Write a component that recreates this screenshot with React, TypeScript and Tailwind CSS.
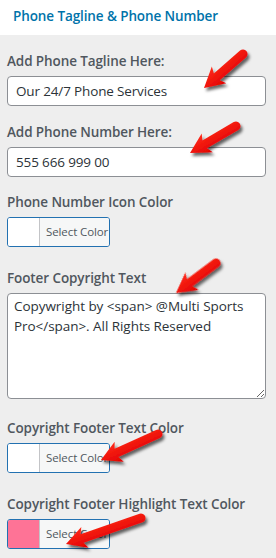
import React from 'react';

const font = { fontFamily: '"Open Sans", "Noto Sans", sans-serif' };

type ArrowProps = { tail: [number, number]; tip: [number, number] };

// red annotation arrow, tip at (0,0) pointing along -x in local coords
const Arrow = ({ tail, tip }: ArrowProps) => {
  const dx = tail[0] - tip[0];
  const dy = tail[1] - tip[1];
  const len = Math.sqrt(dx * dx + dy * dy);
  const angle = (Math.atan2(dy, dx) * 180) / Math.PI;
  const h = 20;
  const w = 11;
  const s = 4.5;
  const d = `M0,0 L${h},${-w} L${h - 3},${-s} L${len},${-s} A${s},${s} 0 0 1 ${len},${s} L${h - 3},${s} L${h},${w} Z`;
  return (
    <g transform={`translate(${tip[0]} ${tip[1]}) rotate(${angle})`}>
      <path d={d} fill="url(#arrowFill)" />
    </g>
  );
};

const Label = ({ children }: { children: React.ReactNode }) => (
  <label className="block text-[13.5px] tracking-[-0.1px] leading-5 font-semibold text-[#50575e] mb-[5px]">
    {children}
  </label>
);

const TextField = ({ value }: { value: string }) => (
  <input
    readOnly
    value={value}
    className="block w-[259px] h-[30px] px-[8px] bg-white border border-[#8c8f94] rounded-[4px] text-[13.5px] tracking-[-0.15px] text-[#2c3338] outline-none"
    style={font}
  />
);

const ColorButton = ({ swatch }: { swatch: string }) => (
  <div className="flex w-[103px] h-[30px] border border-[#2271b1] rounded-[3px] overflow-hidden">
    <div className="w-[31px] h-full" style={{ backgroundColor: swatch }} />
    <div className="flex-1 flex items-center pl-[6px] border-l border-[#c3c4c7] bg-[#f6f7f7] text-[11.5px] tracking-[-0.1px] text-[#50575e]">
      Select Color
    </div>
  </div>
);

export default function App() {
  return (
    <div className="relative w-[276px] h-[558px] bg-[#eeeeee] overflow-hidden" style={font}>
      {/* Section header */}
      <div className="h-[35px] bg-white flex items-center px-[13px] pb-[2px]">
        <h3 className="text-[13.5px] tracking-[-0.1px] font-semibold text-[#0073aa]">Phone Tagline &amp; Phone Number</h3>
      </div>

      <div className="px-[7px]">
        <div className="mt-[16px]">
          <Label>Add Phone Tagline Here:</Label>
          <TextField value="Our 24/7 Phone Services" />
        </div>

        <div className="mt-[16px]">
          <Label>Add Phone Number Here:</Label>
          <TextField value="555 666 999 00" />
        </div>

        <div className="mt-[15px]">
          <Label>Phone Number Icon Color</Label>
          <ColorButton swatch="#ffffff" />
        </div>

        <div className="mt-[21px]">
          <Label>Footer Copyright Text</Label>
          <textarea
            readOnly
            value="Copywright by <span> @Multi Sports Pro</span>. All Rights Reserved"
            className="block w-[259px] h-[106px] px-[6px] pt-[2px] pb-[4px] bg-white border border-[#8c8f94] rounded-[4px] text-[13.5px] tracking-[-0.05px] leading-5 text-[#2c3338] outline-none"
            style={font}
          />
        </div>

        <div className="mt-[19px]">
          <Label>Copyright Footer Text Color</Label>
          <ColorButton swatch="#ffffff" />
        </div>

        <div className="mt-[21px]">
          <Label>Copyright Footer Highlight Text Color</Label>
          <ColorButton swatch="#fe7396" />
        </div>
      </div>

      {/* annotation arrows */}
      <svg className="absolute inset-0 pointer-events-none" width="276" height="558">
        <defs>
          <linearGradient id="arrowFill" x1="0" y1="0" x2="0" y2="1">
            <stop offset="0" stopColor="#ff2a1a" />
            <stop offset="1" stopColor="#e00000" />
          </linearGradient>
          <filter id="shadow" x="-20%" y="-20%" width="150%" height="150%">
            <feDropShadow dx="2" dy="3" stdDeviation="1.5" floodColor="#000" floodOpacity="0.6" />
          </filter>
        </defs>
        <g filter="url(#shadow)">
          <Arrow tail={[243, 54]} tip={[204, 88]} />
          <Arrow tail={[236, 126]} tip={[190, 153]} />
          <Arrow tail={[216, 263]} tip={[176, 293]} />
          <Arrow tail={[158, 434]} tip={[101, 460]} />
          <Arrow tail={[141, 518]} tip={[66, 544]} />
        </g>
      </svg>
    </div>
  );
}
